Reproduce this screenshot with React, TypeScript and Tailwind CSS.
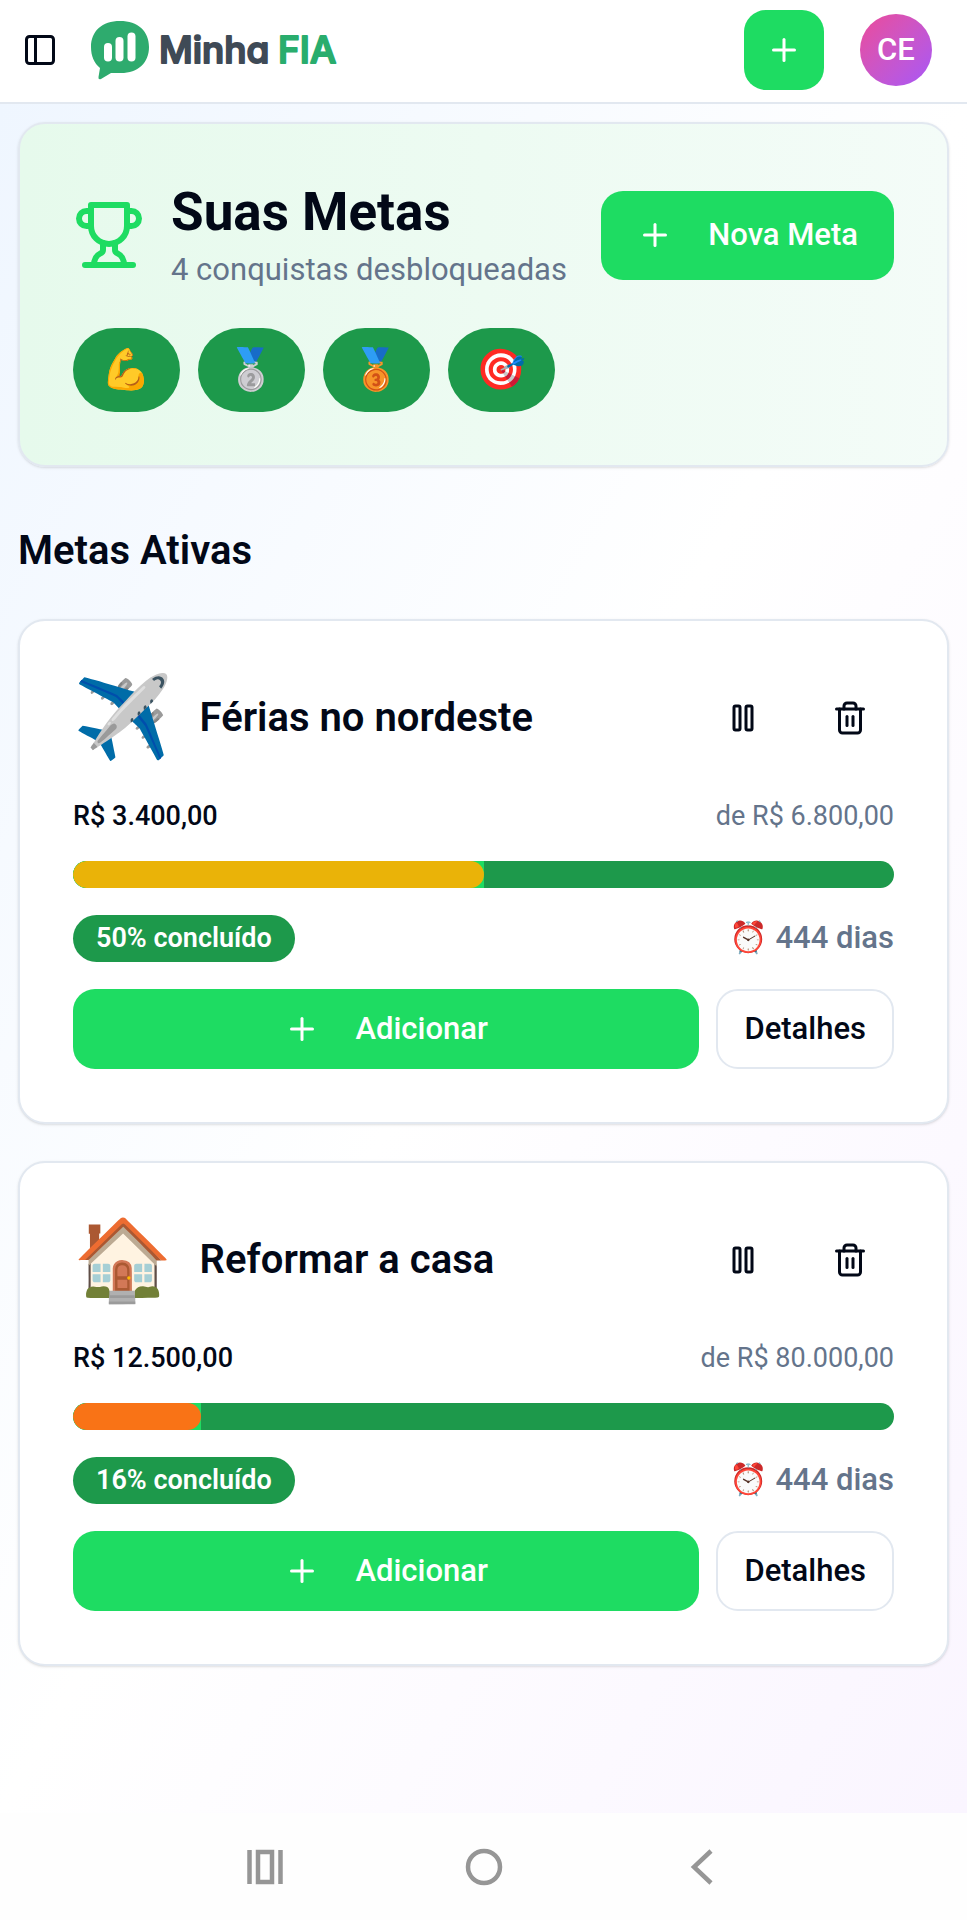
import { PanelLeft, Plus, Trash2 } from "lucide-react";

type Goal = {
  id: string;
  emoji: string;
  title: string;
  saved: string;
  total: string;
  percent: number;
  progress: number;
  days: number;
  barColor: string;
};

const achievements = [
  { emoji: "💪", label: "Persistência" },
  { emoji: "🥈", label: "Prata" },
  { emoji: "🥉", label: "Bronze" },
  { emoji: "🎯", label: "Na mira" },
];

const goals: Goal[] = [
  {
    id: "ferias",
    emoji: "✈️",
    title: "Férias no nordeste",
    saved: "R$ 3.400,00",
    total: "R$ 6.800,00",
    percent: 50,
    progress: 50,
    days: 444,
    barColor: "bg-[#eab308]",
  },
  {
    id: "casa",
    emoji: "🏠",
    title: "Reformar a casa",
    saved: "R$ 12.500,00",
    total: "R$ 80.000,00",
    percent: 16,
    progress: 15.625,
    days: 444,
    barColor: "bg-[#f97316]",
  },
];

function Logo() {
  return (
    <a href="#" aria-label="Minha FIA" className="block">
      <svg width="252" height="62" viewBox="0 0 252 62" className="block">
        <path
          d="M30 2C48 2 59 12 59 28C59 44 48 54 31 54C27 54 24 54 21 54L11 60Q8 61 8.500 58L10 49C4 44 1 37 1 28C1 12 12 2 30 2Z"
          fill="#2eab6e"
        />
        <g stroke="#fff" strokeWidth="8" strokeLinecap="round">
          <path d="M18 28V38.500" />
          <path d="M29.500 22V38.500" />
          <path d="M41.500 17.500V38.500" />
        </g>
        <g
          className="font-['Inter',sans-serif] text-[37px] font-medium [font-feature-settings:'cv11']"
          strokeWidth="2"
          strokeLinejoin="round"
        >
          <text x="69" y="44" fill="#3f4a56" stroke="#3f4a56">Minha</text>
          <text x="188" y="44" fill="#29ad6d" stroke="#29ad6d">FIA</text>
        </g>
      </svg>
    </a>
  );
}

function TrophyIcon() {
  return (
    <svg
      viewBox="0 0 24 24"
      fill="none"
      stroke="currentColor"
      strokeWidth="2"
      strokeLinecap="round"
      strokeLinejoin="round"
      className="size-[72px] shrink-0 text-[#1edc62]"
    >
      <path d="M6 9H4.500a2.500 2.500 0 0 1 0-5H6" />
      <path d="M18 9h1.500a2.500 2.500 0 0 0 0-5H18" />
      <path d="M4 22h16" />
      <path d="M10 14.660V17c0 .55-.47.98-.97 1.210C7.850 18.750 7 20.240 7 22" />
      <path d="M14 14.660V17c0 .55.47.98.97 1.210C16.150 18.750 17 20.240 17 22" />
      <path d="M18 2H6v7a6 6 0 0 0 12 0V2Z" />
    </svg>
  );
}

function PauseIcon() {
  return (
    <svg
      viewBox="0 0 24 24"
      fill="none"
      stroke="currentColor"
      strokeWidth="2"
      strokeLinecap="round"
      strokeLinejoin="round"
      className="size-9"
    >
      <rect x="14" y="4" width="4" height="16" rx="1" />
      <rect x="6" y="4" width="4" height="16" rx="1" />
    </svg>
  );
}

function Header() {
  return (
    <header className="flex items-start justify-between border-b-2 border-[#e2e8f0] bg-white px-[22px] pt-[10px] pb-3">
      <div className="flex h-20 items-center gap-[32px]">
        <button type="button" aria-label="Abrir menu">
          <PanelLeft className="size-9" />
        </button>
        <Logo />
      </div>
      <div className="flex h-20 items-center gap-9 pr-[13px]">
        <button
          type="button"
          aria-label="Adicionar"
          className="flex size-20 items-center justify-center rounded-[22px] bg-[#1edc62] text-white"
        >
          <Plus className="size-9" />
        </button>
        <button
          type="button"
          className="flex size-[72px] items-center justify-center rounded-full bg-linear-to-br from-[#ec4899] to-[#a855f7] text-[31px] font-medium text-white"
        >
          CE
        </button>
      </div>
    </header>
  );
}

function Summary() {
  return (
    <section className="rounded-[27px] border-2 border-[#e2e8f0] bg-linear-to-r from-[#e6faec] to-[#f4fcf8] p-[53px] shadow-sm">
      <div className="flex items-center justify-between">
        <div className="flex items-center gap-[26px]">
          <TrophyIcon />
          <div>
            <h1 className="text-[53px] leading-[70px] font-bold">Suas Metas</h1>
            <p className="text-[31px] leading-[46px] text-[#64748b]">4 conquistas desbloqueadas</p>
          </div>
        </div>
        <button
          type="button"
          className="flex h-[89px] items-center gap-[35px] rounded-[22px] bg-[#1edc62] px-9 text-[31px] font-medium text-white"
        >
          <Plus className="size-9" />
          Nova Meta
        </button>
      </div>
      <ul className="mt-[35px] flex gap-[18px]">
        {achievements.map((item) => (
          <li
            key={item.label}
            className="flex h-[84px] w-[107px] items-center justify-center rounded-full bg-[#1d994b] text-[40px]"
          >
            {item.emoji}
          </li>
        ))}
      </ul>
    </section>
  );
}

function GoalCard({ goal }: { goal: Goal }) {
  return (
    <article className="rounded-[27px] border-2 border-[#e2e8f0] bg-white p-[53px] shadow-sm">
      <div className="flex h-[88px] items-center justify-between">
        <div className="flex items-center gap-[27px]">
          <span className="text-[80px] leading-[88px]">{goal.emoji}</span>
          <h3 className="text-[40px] leading-[56px] font-semibold">{goal.title}</h3>
        </div>
        <div className="flex gap-[18px]">
          <button type="button" aria-label="Pausar meta" className="flex h-20 w-[89px] items-center justify-center">
            <PauseIcon />
          </button>
          <button type="button" aria-label="Excluir meta" className="flex h-20 w-[89px] items-center justify-center">
            <Trash2 className="size-9" />
          </button>
        </div>
      </div>

      <div className="mt-[36px] flex flex-col gap-[27px]">
        <div className="flex justify-between text-[27px] leading-[36px]">
          <span className="font-medium">{goal.saved}</span>
          <span className="text-[#64748b]">de {goal.total}</span>
        </div>

        <div
          role="progressbar"
          aria-label={goal.title}
          aria-valuenow={goal.percent}
          className="h-[27px] overflow-hidden rounded-full bg-[#1d994b]"
        >
          <div className="h-full bg-[#1edc62]" style={{ width: `${goal.progress}%` }}>
            <div className={`h-full rounded-full ${goal.barColor}`} />
          </div>
        </div>

        <div className="flex h-[47px] items-center justify-between">
          <span className="flex h-[47px] items-center rounded-full bg-[#1d994b] px-[23px] text-[27px] font-semibold text-white">
            {goal.percent}% concluído
          </span>
          <span className="text-[31px] font-medium text-[#64748b]">⏰ {goal.days} dias</span>
        </div>

        <div className="flex gap-[17px]">
          <button
            type="button"
            className="flex h-20 flex-1 items-center justify-center gap-[35px] rounded-[22px] bg-[#1edc62] text-[31px] font-medium text-white"
          >
            <Plus className="size-9" />
            Adicionar
          </button>
          <button
            type="button"
            className="h-20 rounded-[22px] border-2 border-[#e2e8f0] bg-white px-[26px] text-[31px] font-medium"
          >
            Detalhes
          </button>
        </div>
      </div>
    </article>
  );
}

function SystemNav() {
  return (
    <nav className="flex h-[107px] items-center justify-center gap-[182px] bg-[#fefefe] text-[#969696]">
      <button type="button" aria-label="Recentes">
        <svg width="36" height="36" viewBox="0 0 36 36" fill="none" stroke="currentColor" className="block">
          <path d="M2.500 1V35M33.500 1V35" strokeWidth="4.500" />
          <rect x="11" y="3" width="14" height="30" strokeWidth="4.500" />
        </svg>
      </button>
      <button type="button" aria-label="Início">
        <svg width="38" height="38" viewBox="0 0 38 38" fill="none" stroke="currentColor" className="block">
          <circle cx="19" cy="19" r="16" strokeWidth="4.500" />
        </svg>
      </button>
      <button type="button" aria-label="Voltar">
        <svg width="36" height="36" viewBox="0 0 36 36" fill="none" stroke="currentColor" className="block">
          <path d="M26 2L9 18L26 34" strokeWidth="4.500" />
        </svg>
      </button>
    </nav>
  );
}

export default function App() {
  return (
    <div className="flex min-h-screen flex-col bg-white font-['Roboto','Noto_Color_Emoji',sans-serif] text-[#020817]">
      <Header />
      <main className="flex-1 bg-linear-to-br from-[#eff6ff] via-white to-[#faf5ff] px-[18px] pt-[18px] pb-20">
        <Summary />
        <section className="mt-[55px]">
          <h2 className="text-[40px] leading-[57px] font-semibold">Metas Ativas</h2>
          <div className="mt-10 flex flex-col gap-[37px]">
            {goals.map((goal) => (
              <GoalCard key={goal.id} goal={goal} />
            ))}
          </div>
        </section>
      </main>
      <SystemNav />
    </div>
  );
}
